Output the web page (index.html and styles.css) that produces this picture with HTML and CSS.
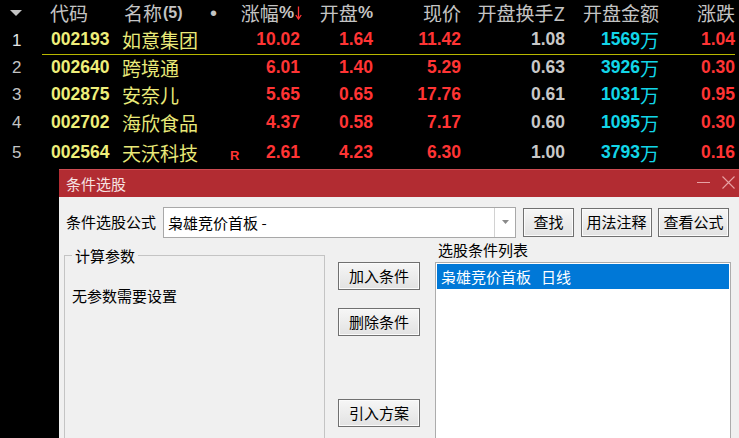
FILE: index.html
```html
<!DOCTYPE html>
<html lang="zh-CN">
<head>
    <meta charset="UTF-8">
    <title>条件选股</title>
    <link rel="stylesheet" href="styles.css">
</head>
<body>
    <div class="quote-table">
        <div class="row head">
            <span class="c-idx"><svg class="sort-tri" width="12" height="6" viewBox="0 0 12 6"><polygon points="0,0 12,0 6,6" fill="#c4c4c4"/></svg></span>
            <span class="c-code">代码</span>
            <span class="c-name">名称<b class="cnt">(5)</b></span>
            <span class="c-mark"><i class="dot">•</i></span>
            <span class="c-num">涨幅<b class="pct">%</b><svg class="down-arrow" width="7" height="14" viewBox="0 0 7 14"><path d="M3.5 0.5V13M0.8 9L3.5 13L6.2 9" stroke="#ff3434" stroke-width="1.3" fill="none"/></svg></span>
            <span class="c-num">开盘<b class="pct">%</b></span>
            <span class="c-num">现价</span>
            <span class="c-num">开盘换手Z</span>
            <span class="c-num">开盘金额</span>
            <span class="c-num">涨跌</span>
        </div>

        <div class="row first">
            <span class="c-idx lit">1</span>
            <span class="c-code">002193</span>
            <span class="c-name">如意集团</span>
            <span class="c-mark"></span>
            <span class="c-num up">10.02</span>
            <span class="c-num up">1.64</span>
            <span class="c-num up">11.42</span>
            <span class="c-num flat">1.08</span>
            <span class="c-num amt">1569<em>万</em></span>
            <span class="c-num up">1.04</span>
        </div>
        <div class="row">
            <span class="c-idx">2</span>
            <span class="c-code">002640</span>
            <span class="c-name">跨境通</span>
            <span class="c-mark"></span>
            <span class="c-num up">6.01</span>
            <span class="c-num up">1.40</span>
            <span class="c-num up">5.29</span>
            <span class="c-num flat">0.63</span>
            <span class="c-num amt">3926<em>万</em></span>
            <span class="c-num up">0.30</span>
        </div>
        <div class="row">
            <span class="c-idx">3</span>
            <span class="c-code">002875</span>
            <span class="c-name">安奈儿</span>
            <span class="c-mark"></span>
            <span class="c-num up">5.65</span>
            <span class="c-num up">0.65</span>
            <span class="c-num up">17.76</span>
            <span class="c-num flat">0.61</span>
            <span class="c-num amt">1031<em>万</em></span>
            <span class="c-num up">0.95</span>
        </div>
        <div class="row">
            <span class="c-idx">4</span>
            <span class="c-code">002702</span>
            <span class="c-name">海欣食品</span>
            <span class="c-mark"></span>
            <span class="c-num up">4.37</span>
            <span class="c-num up">0.58</span>
            <span class="c-num up">7.17</span>
            <span class="c-num flat">0.60</span>
            <span class="c-num amt">1095<em>万</em></span>
            <span class="c-num up">0.30</span>
        </div>
        <div class="row">
            <span class="c-idx">5</span>
            <span class="c-code">002564</span>
            <span class="c-name">天沃科技</span>
            <span class="c-mark"><i class="r-flag">R</i></span>
            <span class="c-num up">2.61</span>
            <span class="c-num up">4.23</span>
            <span class="c-num up">6.30</span>
            <span class="c-num flat">1.00</span>
            <span class="c-num amt">3793<em>万</em></span>
            <span class="c-num up">0.16</span>
        </div>
    </div>

    <div class="dialog">
        <div class="titlebar">
            <span class="title">条件选股</span>
            <div class="win-controls">
                <svg class="win-min" width="13" height="13" viewBox="0 0 13 13"><path d="M0 6.5H13" stroke="#e7a2a4" stroke-width="1"/></svg>
                <svg class="win-close" width="13" height="13" viewBox="0 0 13 13"><path d="M0.5 0.5L12.5 12.5M12.5 0.5L0.5 12.5" stroke="#e7a2a4" stroke-width="1.1"/></svg>
            </div>
        </div>

        <div class="dialog-body">
            <div class="formula-row">
                <span class="formula-label">条件选股公式</span>
                <div class="combo">
                    <span class="combo-text">枭雄竞价首板 -</span>
                    <span class="combo-drop"><svg width="7" height="4" viewBox="0 0 7 4"><polygon points="0,0 7,0 3.5,4" fill="#8a8a8a"/></svg></span>
                </div>
                <button class="btn btn-find">查找</button>
                <button class="btn btn-wide">用法注释</button>
                <button class="btn btn-wide btn-last">查看公式</button>
            </div>

            <div class="work-row">
                <fieldset class="params">
                    <legend>计算参数</legend>
                    <p class="params-empty">无参数需要设置</p>
                </fieldset>

                <div class="actions">
                    <button class="btn btn-act">加入条件</button>
                    <button class="btn btn-act btn-del">删除条件</button>
                    <button class="btn btn-act btn-import">引入方案</button>
                </div>

                <div class="cond-col">
                    <div class="cond-label">选股条件列表</div>
                    <div class="cond-list">
                        <div class="cond-item selected">枭雄竞价首板<span class="period">日线</span></div>
                    </div>
                </div>
            </div>
        </div>
    </div>
</body>
</html>
```

FILE: styles.css
```css
body {
    margin: 0;
    width: 739px;
    height: 438px;
    overflow: hidden;
    position: relative;
    background-color: #000;
    font-family: "Noto Sans CJK SC", "Liberation Sans", sans-serif;
}

/* quote list */
.quote-table {
    color: #c4c4c4;
    font-size: 19px;
}

.row {
    display: grid;
    grid-template-columns: 42px 78px 85px 40px 55px 73px 88px 104px 94px 76px;
    height: 27.5px;
    line-height: 27.5px;
    white-space: nowrap;
}

.row.head {
    height: 26px;
    line-height: 26px;
}

.row > span {
    display: flex;
    align-items: center;
    overflow: visible;
}

.row > span > * {
    flex: none;
}

.row.first > span:not(.c-idx) {
    border-bottom: 1px solid #b8b800;
    box-sizing: border-box;
}

.c-idx {
    padding-left: 12px;
    font-family: "Liberation Sans", sans-serif;
    font-size: 17px;
    color: #c4c4c4;
}

.c-idx.lit {
    color: #e4e4e4;
}

.head .c-idx {
    padding-left: 10px;
}

.c-code {
    padding-left: 9px;
    font-family: "Liberation Sans", sans-serif;
    font-weight: bold;
    font-size: 17.5px;
    color: #eeee7a;
}

.head .c-code {
    padding-left: 8px;
    font-family: "Noto Sans CJK SC", sans-serif;
    font-weight: normal;
    font-size: 19px;
    color: #c4c4c4;
}

.c-name {
    padding-left: 2px;
    color: #e9e978;
}

.head .c-name {
    padding-left: 4px;
    color: #c4c4c4;
}

.cnt {
    font-family: "Liberation Sans", sans-serif;
    font-size: 16px;
    margin-left: 1px;
}

.dot {
    font-style: normal;
    font-family: "Liberation Sans", sans-serif;
    font-size: 20px;
    padding-left: 5px;
}

.r-flag {
    font-style: normal;
    font-family: "Liberation Sans", sans-serif;
    font-weight: bold;
    font-size: 13px;
    color: #ff3434;
    padding-left: 25px;
    padding-top: 6px;
}

.c-num {
    justify-content: flex-end;
    font-family: "Liberation Sans", sans-serif;
    font-weight: bold;
    font-size: 17.5px;
}

.head .c-num {
    font-family: "Noto Sans CJK SC", sans-serif;
    font-weight: normal;
    font-size: 19px;
}

.pct {
    font-family: "Liberation Sans", sans-serif;
    font-size: 17px;
}

.down-arrow {
    margin-left: 1px;
    margin-right: -2px;
}

.up {
    color: #ff3434;
}

.flat {
    color: #c8c8c8;
}

.amt {
    color: #12d6e8;
}

.amt em {
    font-style: normal;
    font-family: "Noto Sans CJK SC", sans-serif;
    font-weight: normal;
    font-size: 19px;
}

/* dialog window */
.dialog {
    position: absolute;
    left: 59px;
    top: 169px;
    width: 690px;
    height: 269px;
    overflow: hidden;
    background-color: #f0f0f0;
    font-size: 15px;
    line-height: 20px;
    color: #000;
}

.titlebar {
    height: 28px;
    box-sizing: border-box;
    background-color: #b22c32;
    border-top: 1px solid #cc4a50;
    display: flex;
    align-items: center;
    padding: 0 14px 0 7px;
}

.title {
    color: #f6e2e2;
}

.win-controls {
    margin-left: auto;
    display: flex;
    gap: 12px;
    margin-bottom: 3px;
}

.dialog-body {
    padding: 10px 0 0 5px;
}

.formula-row {
    display: flex;
    align-items: center;
    height: 30px;
    padding-left: 2px;
}

.formula-label {
    margin-right: 7px;
}

.combo {
    width: 353px;
    height: 31px;
    box-sizing: border-box;
    border: 1px solid #a8a8a8;
    background-color: #fff;
    display: flex;
    margin-right: 7px;
}

.combo-text {
    flex: 1;
    padding-left: 4px;
    line-height: 29px;
}

.combo-drop {
    width: 20px;
    border-left: 1px solid #d2d2d2;
    display: flex;
    align-items: center;
    justify-content: center;
}

.btn {
    height: 29px;
    box-sizing: border-box;
    padding: 0;
    border: 1px solid #707070;
    background: linear-gradient(#f6f6f6, #e2e2e2);
    box-shadow: inset 0 0 0 1px #fbfbfb;
    font: inherit;
    line-height: 20px;
    color: #000;
}

.btn-find {
    width: 51px;
}

.btn-wide {
    width: 71px;
    margin-left: 7px;
}

.btn-last {
    margin-left: 6px;
}

.work-row {
    display: flex;
    align-items: flex-start;
    margin-top: 3px;
}

.params {
    width: 261px;
    height: 220px;
    box-sizing: border-box;
    margin: 5px 0 0 0;
    padding: 0 0 0 7px;
    border: 1px solid #c4c4c4;
}

.params legend {
    padding: 0 3px;
    line-height: 21px;
}

.params-empty {
    margin: 20px 0 0 0;
}

.actions {
    width: 82px;
    margin-left: 13px;
    padding-top: 22px;
    display: flex;
    flex-direction: column;
}

.btn-act {
    width: 82px;
    height: 28px;
}

.btn-del {
    margin-top: 18px;
}

.btn-import {
    margin-top: 63px;
}

.cond-col {
    margin-left: 15px;
}

.cond-label {
    padding-left: 3px;
}

.cond-list {
    width: 296px;
    height: 200px;
    box-sizing: border-box;
    margin-top: 2px;
    padding: 1px;
    border: 1px solid #acacac;
    background-color: #fff;
}

.cond-item {
    height: 25px;
    line-height: 25px;
    padding-left: 4px;
}

.cond-item.selected {
    background-color: #0078d7;
    color: #fff;
}

.period {
    margin-left: 10px;
}
```
